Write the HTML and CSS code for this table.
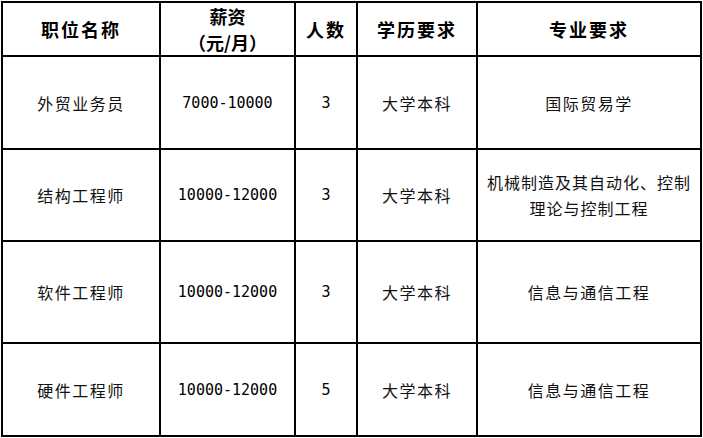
FILE: index.html
```html
<!DOCTYPE html>
<html lang="zh-CN">
<head>
<meta charset="utf-8">
<link rel="stylesheet" href="styles.css">
</head>
<body>
<table class="jobs">
  <colgroup>
    <col class="c1"><col class="c2"><col class="c3"><col class="c4"><col class="c5">
  </colgroup>
  <thead>
    <tr class="head">
      <th>职位名称</th>
      <th class="two"><span class="line">薪资</span><span class="line">（元/月）</span></th>
      <th>人数</th>
      <th>学历要求</th>
      <th>专业要求</th>
    </tr>
  </thead>
  <tbody>
    <tr class="r1">
      <td>外贸业务员</td><td class="num">7000-10000</td><td class="num">3</td><td>大学本科</td><td>国际贸易学</td>
    </tr>
    <tr class="r2">
      <td>结构工程师</td><td class="num">10000-12000</td><td class="num">3</td><td>大学本科</td><td class="multi">机械制造及其自动化、控制理论与控制工程</td>
    </tr>
    <tr class="r3">
      <td>软件工程师</td><td class="num">10000-12000</td><td class="num">3</td><td>大学本科</td><td>信息与通信工程</td>
    </tr>
    <tr class="r4">
      <td>硬件工程师</td><td class="num">10000-12000</td><td class="num">5</td><td>大学本科</td><td>信息与通信工程</td>
    </tr>
  </tbody>
</table>
</body>
</html>
```
FILE: styles.css
```css
html, body {
  margin: 0;
  padding: 0;
  background: #fff;
}

body {
  font-family: "Noto Sans CJK SC", "Noto Sans", sans-serif;
  color: #111;
}

.jobs {
  border-collapse: collapse;
  table-layout: fixed;
  width: 701px;
  margin: 1px 0 0 1px;
  border: 2px solid #000;
}

.c1 { width: 158px; }
.c2 { width: 135px; }
.c3 { width: 62px; }
.c4 { width: 120px; }
.c5 { width: 224px; }

.jobs th,
.jobs td {
  border: 2px solid #000;
  padding: 0 6px;
  text-align: center;
  vertical-align: middle;
}

.jobs th {
  font-size: 18px;
  font-weight: 700;
  letter-spacing: 2px;
  line-height: 26px;
  color: #000;
}

.jobs th.two {
  letter-spacing: 0;
}

.line {
  display: block;
}

.jobs td {
  font-size: 16px;
  font-weight: 400;
  letter-spacing: 1.5px;
  line-height: 26px;
}

.jobs td.num {
  font-family: "DejaVu Sans Mono", "Liberation Mono", monospace;
  font-size: 15px;
  letter-spacing: 0;
  color: #000;
}

.jobs td.multi {
  padding: 0 4px;
  letter-spacing: 1px;
}

.head th { height: 49px; }
.r1 td { height: 91px; }
.r2 td { height: 90px; }
.r3 td { height: 100px; }
.r4 td { height: 91px; }
```
